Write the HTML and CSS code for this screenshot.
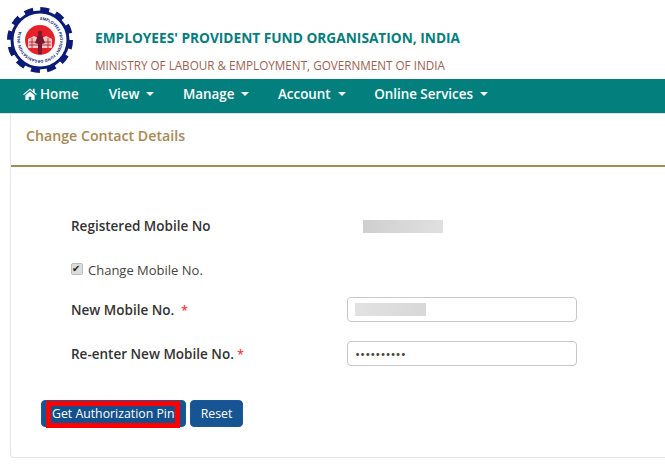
FILE: index.html
```html
<!DOCTYPE html>
<html>
<head>
    <meta charset="utf-8">
    <meta name="viewport" content="width=device-width, initial-scale=1">
    <title>Change Contact Details</title>
    <link rel="stylesheet" href="styles.css">
</head>
<body>
    <header class="header">
        <svg class="header__logo" viewBox="0 0 66 66" role="img" aria-label="EPFO logo">
            <circle cx="33" cy="33" r="30.800" fill="none" stroke="#0b1a78" stroke-width="4.400" stroke-dasharray="9 7.130"/>
            <circle cx="33" cy="33" r="28" fill="none" stroke="#0b1a78" stroke-width="3"/>
            <path id="logo-ring" d="M33 13a20 20 0 1 1-.01 0" fill="none"/>
            <text class="header__logo-ring"><textPath href="#logo-ring">EMPLOYEES PROVIDENT FUND ORGANISATION INDIA</textPath></text>
            <circle cx="33" cy="33" r="15" fill="#e8202a"/>
            <path d="M21 41v-9l6-3 6 3 6-3 6 3v9z" fill="#f6c9c9"/>
            <path d="M22 35h22M22 38h22M25 31v10M41 31v10" stroke="#b3121c" stroke-width=".8"/>
            <path d="M31 47v-10l-3-1 3-8h4l3 8-3 1v10z" fill="#7a1a2e"/>
            <circle cx="33" cy="26" r="2.200" fill="#7a1a2e"/>
        </svg>
        <div class="header__titles">
            <h1 class="header__title">EMPLOYEES' PROVIDENT FUND ORGANISATION, INDIA</h1>
            <p class="header__subtitle">MINISTRY OF LABOUR &amp; EMPLOYMENT, GOVERNMENT OF INDIA</p>
        </div>
    </header>

    <nav class="nav">
        <a class="nav__item nav__item--home">
            <svg class="nav__icon" viewBox="0 0 16 14"><path d="M8 0.500 0 7.300l.9 1L8 2.300l7.100 6 .9-1-2.600-2.200V1h-2v2.400zM2.600 8.600V14h3.900v-3.800h3V14h3.900V8.600L8 4z" fill="#fff"/></svg>
            <span>Home</span>
        </a>
        <a class="nav__item nav__item--view"><span>View</span><span class="nav__caret"></span></a>
        <a class="nav__item nav__item--manage"><span>Manage</span><span class="nav__caret"></span></a>
        <a class="nav__item nav__item--account"><span>Account</span><span class="nav__caret"></span></a>
        <a class="nav__item"><span>Online Services</span><span class="nav__caret"></span></a>
    </nav>

    <main class="panel">
        <h2 class="panel__title">Change Contact Details</h2>

        <form class="contact-form">
            <div class="contact-form__row contact-form__row--registered">
                <label class="contact-form__label">Registered Mobile No</label>
                <span class="contact-form__masked"></span>
            </div>

            <label class="contact-form__check">
                <input class="contact-form__checkbox" type="checkbox" checked>
                Change Mobile No.
            </label>

            <div class="contact-form__row contact-form__row--new">
                <label class="contact-form__label" for="newMobile">New Mobile No. &nbsp;<span class="contact-form__req">*</span></label>
                <div class="contact-form__field">
                    <input id="newMobile" class="contact-form__input" type="text">
                    <span class="contact-form__mask"></span>
                </div>
            </div>

            <div class="contact-form__row contact-form__row--confirm">
                <label class="contact-form__label" for="confirmMobile">Re-enter New Mobile No. <span class="contact-form__req">*</span></label>
                <div class="contact-form__field">
                    <input id="confirmMobile" class="contact-form__input" type="password" value="0000000000">
                </div>
            </div>

            <div class="contact-form__buttons">
                <button class="contact-form__button contact-form__button--pin" type="button"><span class="contact-form__highlight">Get Authorization Pin</span></button>
                <button class="contact-form__button contact-form__button--reset" type="reset">Reset</button>
            </div>
        </form>
    </main>
</body>
</html>
```

FILE: styles.css
```css
* {
    box-sizing: border-box;
}

body {
    margin: 0;
    height: 475px;
    overflow: hidden;
    background-color: #fff;
    color: #333;
    font-family: "Open Sans", "Noto Sans", sans-serif;
}

.header {
    display: flex;
    height: 79px;
    padding: 7px 0 0 7px;
}
.header__logo {
    width: 66px;
    height: 66px;
    flex: none;
}
.header__logo-ring {
    font-size: 3.900px;
    font-weight: 700;
    fill: #0b1a78;
}
.header__titles {
    margin-left: 22px;
    padding-top: 21px;
}
.header__title {
    margin: 0;
    color: #03807e;
    font-size: 13.700px;
    line-height: 20px;
    font-weight: 700;
    white-space: nowrap;
}
.header__subtitle {
    margin: 9px 0 0;
    color: #a0604c;
    font-size: 11.700px;
    line-height: 16px;
    white-space: nowrap;
}

.nav {
    display: flex;
    align-items: center;
    height: 35px;
    padding: 0 0 5px 23px;
    background-color: #03807e;
    border-bottom: 1px solid #dfe3e3;
}
.nav__item {
    display: flex;
    align-items: center;
    gap: 7px;
    margin-right: 28.500px;
    color: #fff;
    font-size: 13.400px;
    font-weight: 600;
    white-space: nowrap;
}
.nav__item--home {
    gap: 3px;
    margin-right: 30px;
}
.nav__icon {
    width: 14px;
    height: 12px;
}
.nav__caret {
    width: 0;
    height: 0;
    border-top: 4px solid #fff;
    border-left: 4px solid transparent;
    border-right: 4px solid transparent;
}

.panel {
    height: 344px;
    margin-left: 10px;
    border-left: 1px solid #e7e7e7;
    border-bottom: 1px solid #e7e7e7;
    border-bottom-left-radius: 4px;
}
.panel__title {
    height: 53px;
    margin: 0;
    padding: 12px 0 0 15px;
    border-bottom: 2px solid #a88a4c;
    color: #ab8752;
    font-size: 14.200px;
    line-height: 20px;
    font-weight: 600;
}

.contact-form {
    display: flex;
    flex-direction: column;
    align-items: flex-start;
    padding: 50px 0 0 60px;
    font-size: 13.500px;
}
.contact-form__row {
    display: flex;
    align-items: center;
}
.contact-form__label {
    width: 276px;
    font-weight: 600;
    white-space: nowrap;
}
.contact-form__row--registered .contact-form__label {
    width: 292px;
}
.contact-form__row--new {
    margin-top: 18px;
}
.contact-form__row--confirm {
    margin-top: 19px;
}
.contact-form__masked {
    width: 80px;
    height: 13px;
    background: linear-gradient(90deg, #cfcfcf, #e0e0e0);
}
.contact-form__check {
    display: flex;
    align-items: center;
    margin-top: 26px;
    color: #444;
    font-size: 13px;
    line-height: 18px;
}
.contact-form__checkbox {
    appearance: none;
    position: relative;
    width: 12px;
    height: 12px;
    margin: 0 5px 3px 0;
    border: 1px solid #bbb;
    border-radius: 2px;
    background-color: #ddd;
}
.contact-form__checkbox::after {
    content: "\2714";
    position: absolute;
    top: -2px;
    left: 0;
    color: #222;
    font-family: "DejaVu Sans", sans-serif;
    font-size: 10px;
    line-height: 14px;
}
.contact-form__req {
    color: #f33;
    font-size: 12px;
}
.contact-form__field {
    position: relative;
}
.contact-form__input {
    display: block;
    width: 230px;
    height: 25px;
    padding: 0 7px;
    border: 1px solid #c8c8c8;
    border-radius: 4px;
    background-color: #fff;
    color: #444;
    font-family: inherit;
    font-size: 13.500px;
    outline: none;
}
.contact-form__mask {
    position: absolute;
    top: 6px;
    left: 8px;
    width: 71px;
    height: 13px;
    background: linear-gradient(90deg, #e2e2e2, #d8d8d8);
}

.contact-form__buttons {
    display: flex;
    gap: 4px;
    margin: 34px 0 0 -30px;
}
.contact-form__button {
    height: 27px;
    padding: 0;
    border: 1px solid #1a5a9a;
    border-radius: 4px;
    background-color: #175493;
    color: #fff;
    font-family: inherit;
    font-size: 12.300px;
}
.contact-form__button--pin {
    width: 145px;
    text-align: left;
    padding-left: 4px;
}
.contact-form__button--reset {
    width: 53px;
}
.contact-form__highlight {
    display: block;
    height: 27px;
    width: 134px;
    padding-left: 1px;
    border: 5px solid #f00;
    background-color: #14508e;
    line-height: 16px;
    white-space: nowrap;
}
```
